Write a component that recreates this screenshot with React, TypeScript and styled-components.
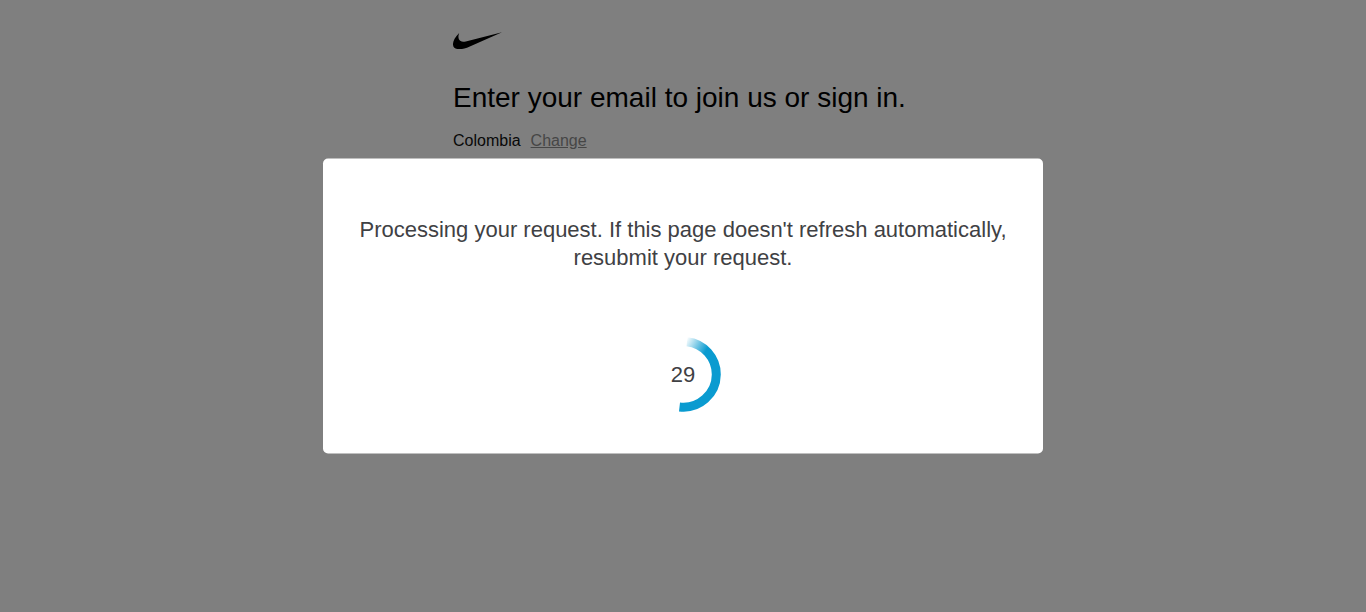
import React from "react";
import styled, { createGlobalStyle } from "styled-components";

const GlobalStyle = createGlobalStyle`
  * { box-sizing: border-box; }
  body {
    margin: 0;
    background: #fff;
    color: #111;
    font-family: "Liberation Sans", Arial, sans-serif;
  }
`;

const Page = styled.main`
  width: 100%;
  max-width: 460px;
  margin: 0 auto;
  padding-top: 32px;
`;

const Logo = styled.svg`
  display: block;
  width: 49px;
  height: 17px;
`;

const Heading = styled.h1`
  margin: 31px 0 0;
  color: #000;
  font-size: 28px;
  font-weight: 400;
  line-height: 36px;
  white-space: nowrap;
`;

const Region = styled.p`
  display: flex;
  gap: 10px;
  margin: 13px 0 0;
  font-size: 16px;
  line-height: 24px;
`;

const ChangeLink = styled.a`
  color: #8d8d8d;
  text-decoration: underline;
`;

const Overlay = styled.div`
  position: fixed;
  inset: 0;
  background: rgba(0, 0, 0, 0.5);
`;

const Dialog = styled.div`
  position: absolute;
  top: 50%;
  left: 50%;
  display: flex;
  flex-direction: column;
  align-items: center;
  width: 720px;
  max-width: 100%;
  padding: 57px 36px 41px;
  border-radius: 5px;
  background: #fff;
  color: #3f4144;
  transform: translate(-50%, -50%);
`;

const Message = styled.p`
  margin: 0 0 65px;
  font-size: 22px;
  line-height: 28px;
  text-align: center;
`;

const Progress = styled.div`
  display: grid;
  place-items: center;
  width: 76px;
  height: 76px;
  font-size: 22px;
  line-height: 28px;

  > * {
    grid-area: 1 / 1;
  }
`;

const Ring = styled.svg`
  width: 76px;
  height: 76px;
`;

export default function App() {
  return (
    <>
      <GlobalStyle />
      <Page>
        <Logo viewBox="0 0 49 17" role="img" aria-label="Nike">
          <path d="M49 .2L14 15.7C10.8 17 8 17.2 5.8 17.1 3.2 17 1.3 16.2.4 14.4-.9 10.8.9 6.2 6.2.9 5.2 3.2 5.2 5.6 5.9 7.3 7 9.7 9.6 10.2 12.8 9.4Z" />
        </Logo>
        <Heading>Enter your email to join us or sign in.</Heading>
        <Region>
          <span>Colombia</span>
          <ChangeLink href="#country">Change</ChangeLink>
        </Region>
      </Page>
      <Overlay>
        <Dialog role="dialog" aria-modal="true" aria-labelledby="status">
          <Message id="status">
            Processing your request. If this page doesn't refresh automatically, resubmit your request.
          </Message>
          <Progress>
            <Ring viewBox="0 0 76 76" aria-hidden="true">
              <defs>
                <linearGradient id="fade" gradientUnits="userSpaceOnUse" x1="41" y1="3" x2="61" y2="14">
                  <stop offset="0" stopColor="#0a9bd0" stopOpacity="0" />
                  <stop offset="1" stopColor="#0a9bd0" />
                </linearGradient>
              </defs>
              <path
                d="M42 5.2A33 33 0 0 1 71.3 38A33 33 0 0 1 34.5 70.5"
                fill="none"
                stroke="url(#fade)"
                strokeWidth="9"
              />
            </Ring>
            <span>29</span>
          </Progress>
        </Dialog>
      </Overlay>
    </>
  );
}
